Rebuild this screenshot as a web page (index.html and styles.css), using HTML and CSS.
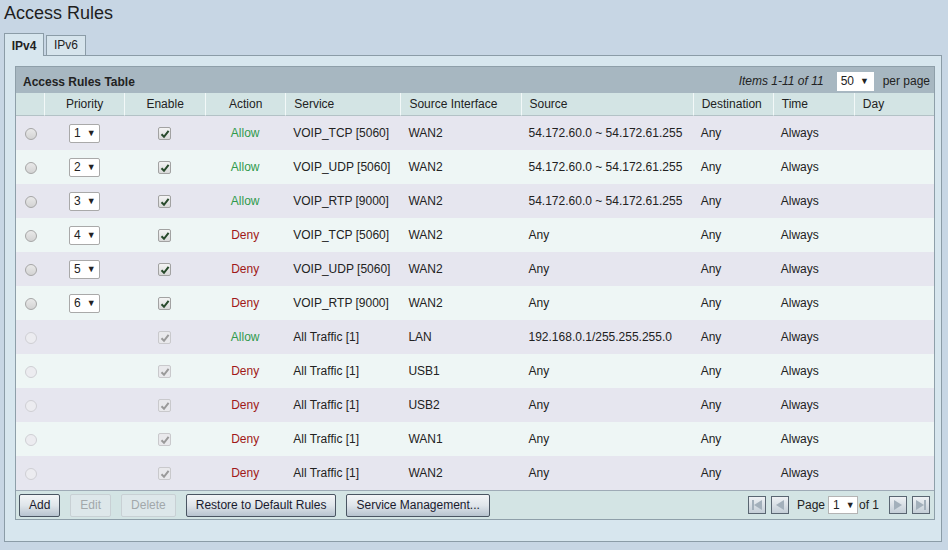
FILE: index.html
```html
<!DOCTYPE html>
<html lang="en">
  <head>
    <meta charset="utf-8">
    <title>Access Rules</title>
    <link rel="stylesheet" href="styles.css">
  </head>
  <body>
    <h1 class="page-title">Access Rules</h1>

    <div class="tabs">
      <div class="tab tab-active">IPv4</div>
      <div class="tab">IPv6</div>
    </div>

    <div class="panel">
      <div class="grid-box">
        <div class="grid-title">
          <span class="grid-name">Access Rules Table</span>
          <span class="items">Items 1-11 of 11</span>
          <span class="fake-select sel-50">50 <i class="arrow">&#9660;</i></span>
          <span class="per-page">per page</span>
        </div>

        <table class="rules">
          <colgroup>
            <col style="width:28px"><col style="width:80px"><col style="width:81px"><col style="width:80px">
            <col style="width:115px"><col style="width:120px"><col style="width:172px"><col style="width:80px">
            <col style="width:81px"><col style="width:80px">
          </colgroup>
          <thead>
            <tr>
              <th></th>
              <th class="c">Priority</th>
              <th class="c">Enable</th>
              <th class="c">Action</th>
              <th>Service</th>
              <th>Source Interface</th>
              <th>Source</th>
              <th>Destination</th>
              <th>Time</th>
              <th>Day</th>
            </tr>
          </thead>
          <tbody id="rows"></tbody>
        </table>

        <div class="grid-foot">
          <button class="btn">Add</button>
          <button class="btn" disabled>Edit</button>
          <button class="btn" disabled>Delete</button>
          <button class="btn btn-wide">Restore to Default Rules</button>
          <button class="btn btn-wide">Service Management...</button>

          <div class="pager">
            <span class="pg-btn"><svg width="16" height="16" viewBox="0 0 16 16"><rect x="3" y="3" width="2" height="10" fill="#a3b0bb"/><path d="M13 3 L5 8 L13 13 Z" fill="#a3b0bb"/></svg></span>
            <span class="pg-btn"><svg width="16" height="16" viewBox="0 0 16 16"><path d="M12 3 L4 8 L12 13 Z" fill="#a3b0bb"/></svg></span>
            <span class="pg-label">Page</span>
            <span class="fake-select sel-page">1 <i class="arrow">&#9660;</i></span>
            <span class="pg-of">of 1</span>
            <span class="pg-btn"><svg width="16" height="16" viewBox="0 0 16 16"><path d="M4 3 L12 8 L4 13 Z" fill="#a3b0bb"/></svg></span>
            <span class="pg-btn"><svg width="16" height="16" viewBox="0 0 16 16"><path d="M3 3 L11 8 L3 13 Z" fill="#a3b0bb"/><rect x="11" y="3" width="2" height="10" fill="#a3b0bb"/></svg></span>
          </div>
        </div>
      </div>
    </div>

    <script>
      // rules shown in the table; priority 0 means a fixed default rule
      let rules = [
        [1, "Allow", "VOIP_TCP [5060]", "WAN2", "54.172.60.0 ~ 54.172.61.255"],
        [2, "Allow", "VOIP_UDP [5060]", "WAN2", "54.172.60.0 ~ 54.172.61.255"],
        [3, "Allow", "VOIP_RTP [9000]", "WAN2", "54.172.60.0 ~ 54.172.61.255"],
        [4, "Deny", "VOIP_TCP [5060]", "WAN2", "Any"],
        [5, "Deny", "VOIP_UDP [5060]", "WAN2", "Any"],
        [6, "Deny", "VOIP_RTP [9000]", "WAN2", "Any"],
        [0, "Allow", "All Traffic [1]", "LAN", "192.168.0.1/255.255.255.0"],
        [0, "Deny", "All Traffic [1]", "USB1", "Any"],
        [0, "Deny", "All Traffic [1]", "USB2", "Any"],
        [0, "Deny", "All Traffic [1]", "WAN1", "Any"],
        [0, "Deny", "All Traffic [1]", "WAN2", "Any"]
      ];

      let check = '<svg width="10" height="10" viewBox="0 0 10 10"><path d="M1.5 5.2 L4 7.8 L8.6 1.8" fill="none" stroke="currentColor" stroke-width="2"/></svg>';
      let html = "";

      for (let i = 0; i < rules.length; i++) {
        let r = rules[i];
        let fixed = r[0] === 0;
        html += '<tr class="' + (i % 2 ? "even" : "odd") + (fixed ? " fixed" : "") + '">';
        html += '<td class="c"><span class="radio"></span></td>';
        html += '<td class="c">' + (fixed ? "" : '<span class="fake-select sel-prio">' + r[0] + ' <i class="arrow">&#9660;</i></span>') + '</td>';
        html += '<td class="c"><span class="checkbox">' + check + '</span></td>';
        html += '<td class="c ' + r[1].toLowerCase() + '">' + r[1] + '</td>';
        html += '<td>' + r[2] + '</td><td>' + r[3] + '</td><td>' + r[4] + '</td>';
        html += '<td>Any</td><td>Always</td><td></td></tr>';
      }
      document.getElementById("rows").innerHTML = html;
    </script>
  </body>
</html>
```

FILE: styles.css
```css
body {
  margin: 0;
  background-color: #c7d6e4;
  font-family: "Liberation Sans", Arial, sans-serif;
  font-size: 12px;
  color: #222;
}

.page-title {
  margin: 0;
  padding: 3px 0 0 4px;
  height: 33px;
  box-sizing: border-box;
  font-size: 18px;
  font-weight: normal;
  color: #1e1e1e;
}

.tabs {
  display: flex;
  align-items: flex-end;
  gap: 2px;
  padding-left: 4px;
  height: 22px;
  position: relative;
  z-index: 1;
}

.tab {
  width: 40px;
  height: 20px;
  box-sizing: border-box;
  border: 1px solid #8b9ca7;
  border-bottom: none;
  background-color: #d6e4ec;
  text-align: center;
  line-height: 18px;
  color: #222;
}

.tab-active {
  height: 23px;
  margin-bottom: -1px;
  line-height: 24px;
  font-weight: bold;
  background-color: #d7e6ee;
}

.panel {
  margin-left: 4px;
  width: 938px;
  height: 487px;
  box-sizing: border-box;
  border: 1px solid #8b9ca7;
  background-color: #d7e6ee;
  padding: 10px 6px 0 10px;
}

.grid-box {
  width: 920px;
  box-sizing: border-box;
  border: 1px solid #8e9fa9;
  background-color: #e6e6ef;
}

.grid-title {
  display: flex;
  align-items: center;
  height: 26px;
  padding: 0 4px 0 7px;
  background-color: #a7b7c1;
}

.grid-name {
  font-weight: bold;
  flex-grow: 1;
  padding-top: 4px;
}

.items {
  font-style: italic;
  margin-right: 13px;
  padding-top: 2px;
}

.per-page {
  margin-left: 9px;
  padding-top: 2px;
}

.fake-select {
  display: inline-flex;
  align-items: center;
  box-sizing: border-box;
  background-color: #fff;
  color: #222;
  padding-left: 4px;
}

.arrow {
  font-style: normal;
  font-size: 9px;
  margin-left: 6px;
}

.sel-50 {
  width: 37px;
  height: 19px;
  font-size: 12px;
  margin-top: 2px;
}

.sel-prio {
  width: 31px;
  height: 19px;
  border: 1px solid #a9a9a9;
  border-radius: 2px;
  vertical-align: middle;
  margin-left: 1px;
}

.sel-page {
  width: 30px;
  height: 18px;
  border: 1px solid #b4b4b4;
  margin: 0 1px;
}

.rules {
  width: 918px;
  table-layout: fixed;
  border-collapse: separate;
  border-spacing: 0;
}

.rules th {
  height: 22px;
  padding: 0 0 0 8px;
  background-color: #d3e4e4;
  border-left: 1px solid #f2f8f8;
  border-bottom: 1px solid #b3c2c6;
  font-weight: normal;
  text-align: left;
}

.rules th:first-child {
  border-left: none;
}

.rules td {
  height: 34px;
  padding: 0 0 0 8px;
  white-space: nowrap;
}

.rules .c {
  text-align: center;
  padding-left: 0;
}

.odd td {
  background-color: #e6e6ef;
}

.even td {
  background-color: #eef6f5;
}

.allow {
  color: #2f9a4c;
}

.deny {
  color: #a01818;
}

.radio {
  display: inline-block;
  width: 12px;
  height: 12px;
  box-sizing: border-box;
  border-radius: 50%;
  border: 1px solid #a6a6a6;
  background: linear-gradient(#e9e9e9, #d3d3d3);
  vertical-align: middle;
  margin-left: 1px;
}

.checkbox {
  display: inline-flex;
  align-items: center;
  justify-content: center;
  width: 13px;
  height: 13px;
  box-sizing: border-box;
  border: 1px solid #a2a2a2;
  border-radius: 2px;
  background: linear-gradient(#f4f4f4, #d9d9d9);
  color: #284a2c;
  vertical-align: middle;
}

.fixed .radio {
  border-color: #cfcfd4;
  background: #ececf0;
}

.fixed .checkbox {
  border-color: #c9c9cc;
  background: #e9e9ec;
  color: #9a9a9a;
}

.grid-foot {
  display: flex;
  align-items: center;
  height: 28px;
  padding: 0 3px;
  border-top: 1px solid #9eaab6;
  background-color: #d3e4e4;
}

.btn {
  height: 23px;
  margin-right: 10px;
  padding: 0 9px;
  font-family: inherit;
  font-size: 12px;
  color: #1a1a2e;
  border: 1px solid #4a5562;
  border-radius: 2px;
  background: linear-gradient(#f3f5f7, #dfe5ea 50%, #b7c3cf);
}

.btn:disabled {
  color: #a2a8aa;
  border-color: #c8d0d4;
  background: #dde7ea;
}

.btn-wide {
  padding: 0 9px;
}

.pager {
  display: flex;
  align-items: center;
  margin-left: auto;
  margin-right: 1px;
}

.pg-btn {
  display: inline-flex;
  align-items: center;
  justify-content: center;
  width: 18px;
  height: 18px;
  box-sizing: border-box;
  border: 1px solid #5a6672;
  background: linear-gradient(#eef1f4, #c4ced7);
  margin-left: 5px;
}

.pg-label {
  margin: 0 2px 0 8px;
}

.pg-of {
  margin-right: 5px;
}
```
